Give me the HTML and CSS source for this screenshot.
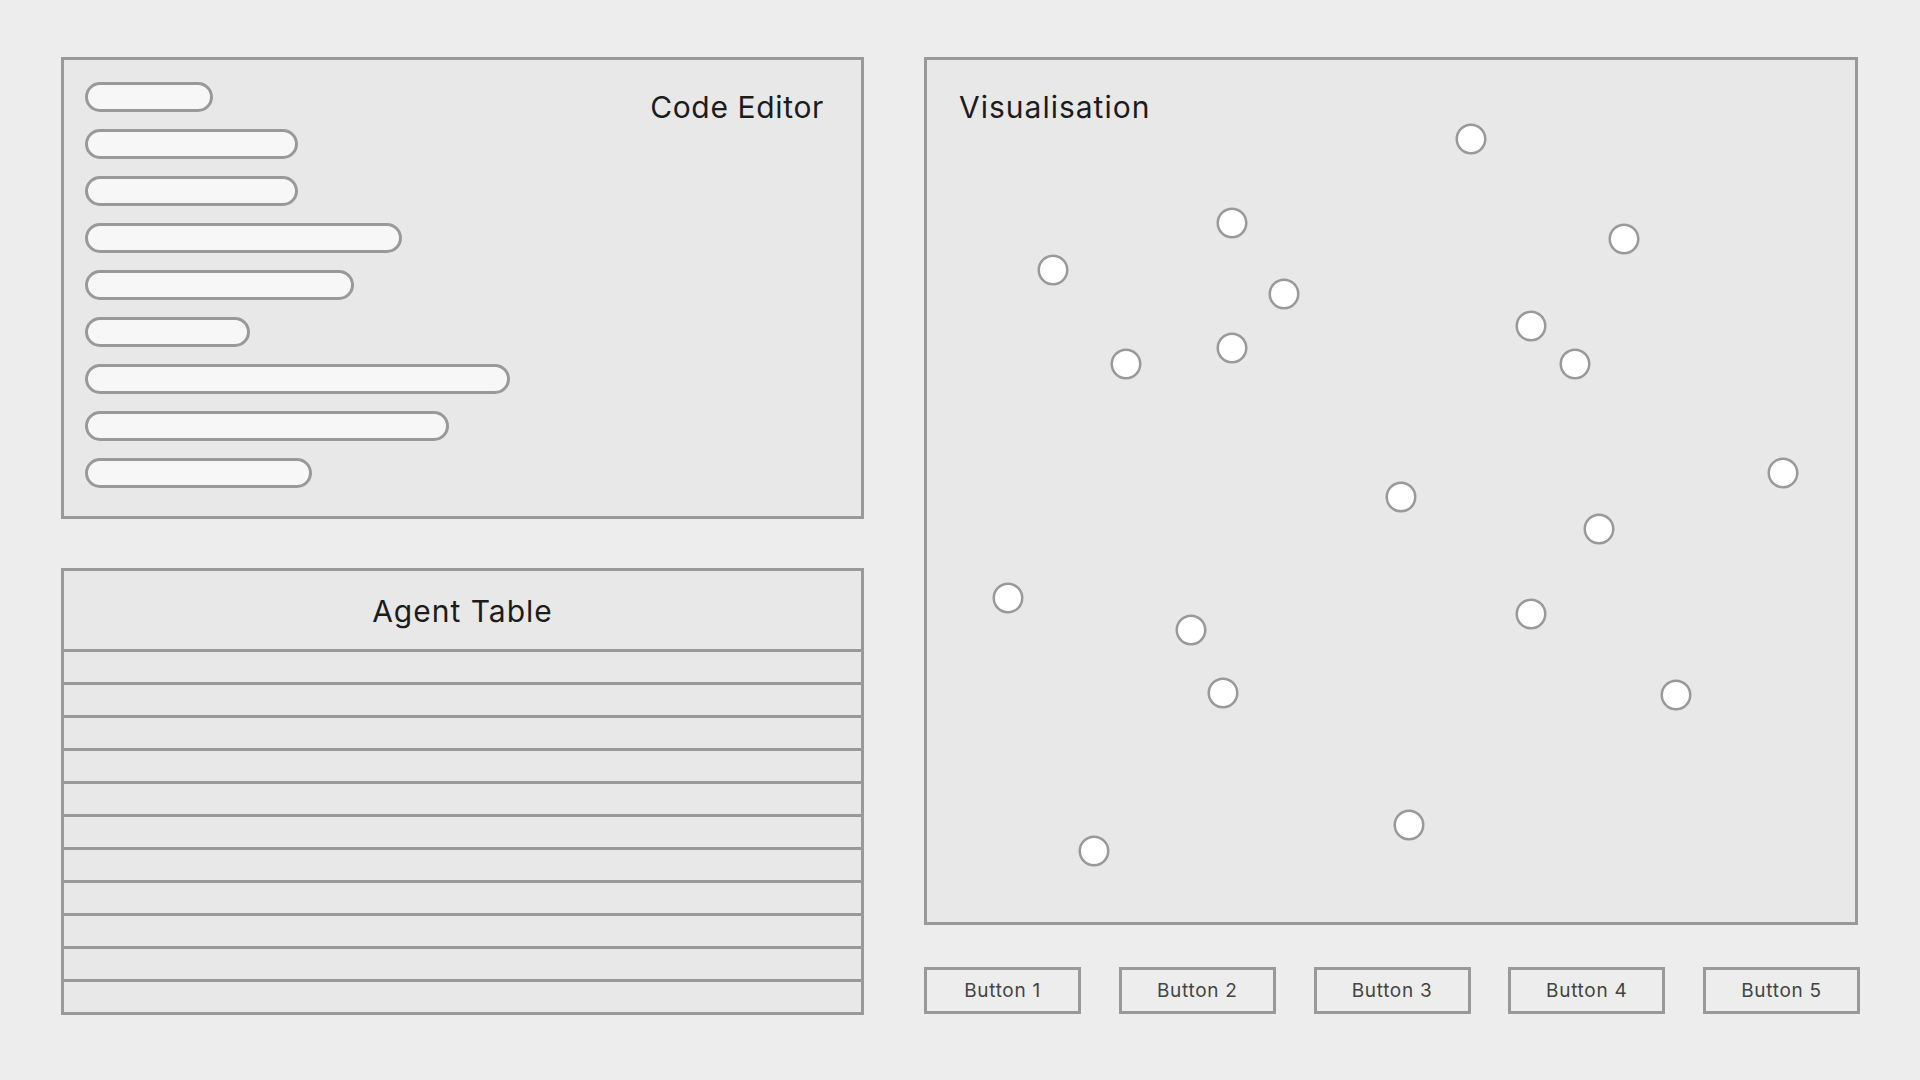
FILE: index.html
```html
<!DOCTYPE html>
<html lang="en">
<head>
<meta charset="utf-8">
<title>Agent Workbench</title>
<link rel="stylesheet" href="styles.css">
</head>
<body>
<div class="page">
  <div class="left">
    <section class="panel editor">
      <div class="lines">
        <div class="line" style="width:128px"></div>
        <div class="line" style="width:213px"></div>
        <div class="line" style="width:213px"></div>
        <div class="line" style="width:317px"></div>
        <div class="line" style="width:269px"></div>
        <div class="line" style="width:165px"></div>
        <div class="line" style="width:425px"></div>
        <div class="line" style="width:364px"></div>
        <div class="line" style="width:227px"></div>
      </div>
      <h2 class="title editor-title">Code Editor</h2>
    </section>
    <section class="panel table">
      <div class="table-head"><h2 class="title">Agent Table</h2></div>
      <div class="row"></div>
      <div class="row"></div>
      <div class="row"></div>
      <div class="row"></div>
      <div class="row"></div>
      <div class="row"></div>
      <div class="row"></div>
      <div class="row"></div>
      <div class="row"></div>
      <div class="row"></div>
      <div class="row"></div>
    </section>
  </div>
  <div class="right">
    <section class="panel viz">
      <h2 class="title viz-title">Visualisation</h2>
      <svg class="canvas" width="928" height="862" viewBox="0 0 928 862">
        <g class="nodes">
          <circle cx="544" cy="79" r="14.25"/>
          <circle cx="305" cy="163" r="14.25"/>
          <circle cx="697" cy="179" r="14.25"/>
          <circle cx="126" cy="210" r="14.25"/>
          <circle cx="357" cy="234" r="14.25"/>
          <circle cx="604" cy="266" r="14.25"/>
          <circle cx="199" cy="304" r="14.25"/>
          <circle cx="305" cy="288" r="14.25"/>
          <circle cx="648" cy="304" r="14.25"/>
          <circle cx="856" cy="413" r="14.25"/>
          <circle cx="474" cy="437" r="14.25"/>
          <circle cx="672" cy="469" r="14.25"/>
          <circle cx="81" cy="538" r="14.25"/>
          <circle cx="604" cy="554" r="14.25"/>
          <circle cx="264" cy="570" r="14.25"/>
          <circle cx="296" cy="633" r="14.25"/>
          <circle cx="749" cy="635" r="14.25"/>
          <circle cx="482" cy="765" r="14.25"/>
          <circle cx="167" cy="791" r="14.25"/>
        </g>
      </svg>
    </section>
    <div class="buttons">
      <button class="btn">Button 1</button>
      <button class="btn">Button 2</button>
      <button class="btn">Button 3</button>
      <button class="btn">Button 4</button>
      <button class="btn">Button 5</button>
    </div>
  </div>
</div>
</body>
</html>
```
FILE: styles.css
```css
* { box-sizing: border-box; }
html, body { margin: 0; padding: 0; }
body {
  background: #ededed;
  font-family: "Inter", "Open Sans", sans-serif;
  color: #1c1c1c;
  width: 1920px;
  height: 1080px;
  overflow: hidden;
}
.page {
  display: flex;
  gap: 60px;
  padding: 57px 0 0 61px;
}
.left {
  width: 803px;
  display: flex;
  flex-direction: column;
  gap: 49px;
}
.right {
  width: 936px;
  display: flex;
  flex-direction: column;
  gap: 42px;
}
.panel {
  background: #e8e8e8;
  border: 3px solid #999999;
}
.title {
  margin: 0;
  font-weight: 400;
  font-size: 30px;
  line-height: 36px;
  letter-spacing: 1px;
  color: #1c1c1c;
}

/* Code editor */
.editor {
  height: 462px;
  display: flex;
  align-items: flex-start;
  padding: 22px 37px 28px 21px;
}
.lines {
  display: flex;
  flex-direction: column;
  gap: 17px;
}
.line {
  height: 30px;
  border: 3px solid #999999;
  border-radius: 15px;
  background: #f7f7f7;
}
.editor-title {
  margin-left: auto;
  margin-top: 7px;
  letter-spacing: 0.65px;
}

/* Agent table */
.table {
  height: 447px;
  display: flex;
  flex-direction: column;
}
.table-head {
  height: 81px;
  border-bottom: 3px solid #999999;
  display: flex;
  align-items: center;
  justify-content: center;
  padding-top: 2px;
}
.row {
  height: 33px;
  border-bottom: 3px solid #999999;
}
.row:last-child {
  height: 30px;
  border-bottom: none;
}

/* Visualisation */
.viz {
  position: relative;
  width: 934px;
  height: 868px;
  padding: 29px 0 0 32px;
}
.canvas {
  position: absolute;
  left: 0;
  top: 0;
}
.nodes circle {
  fill: #ffffff;
  stroke: #999999;
  stroke-width: 2.5;
}

/* Buttons */
.buttons {
  display: flex;
  justify-content: space-between;
}
.btn {
  width: 157px;
  height: 47px;
  border: 3px solid #999999;
  background: transparent;
  font-family: "Inter", "Open Sans", sans-serif;
  font-size: 19px;
  color: #444444;
  padding: 0;
  letter-spacing: 0.7px;
}
```
